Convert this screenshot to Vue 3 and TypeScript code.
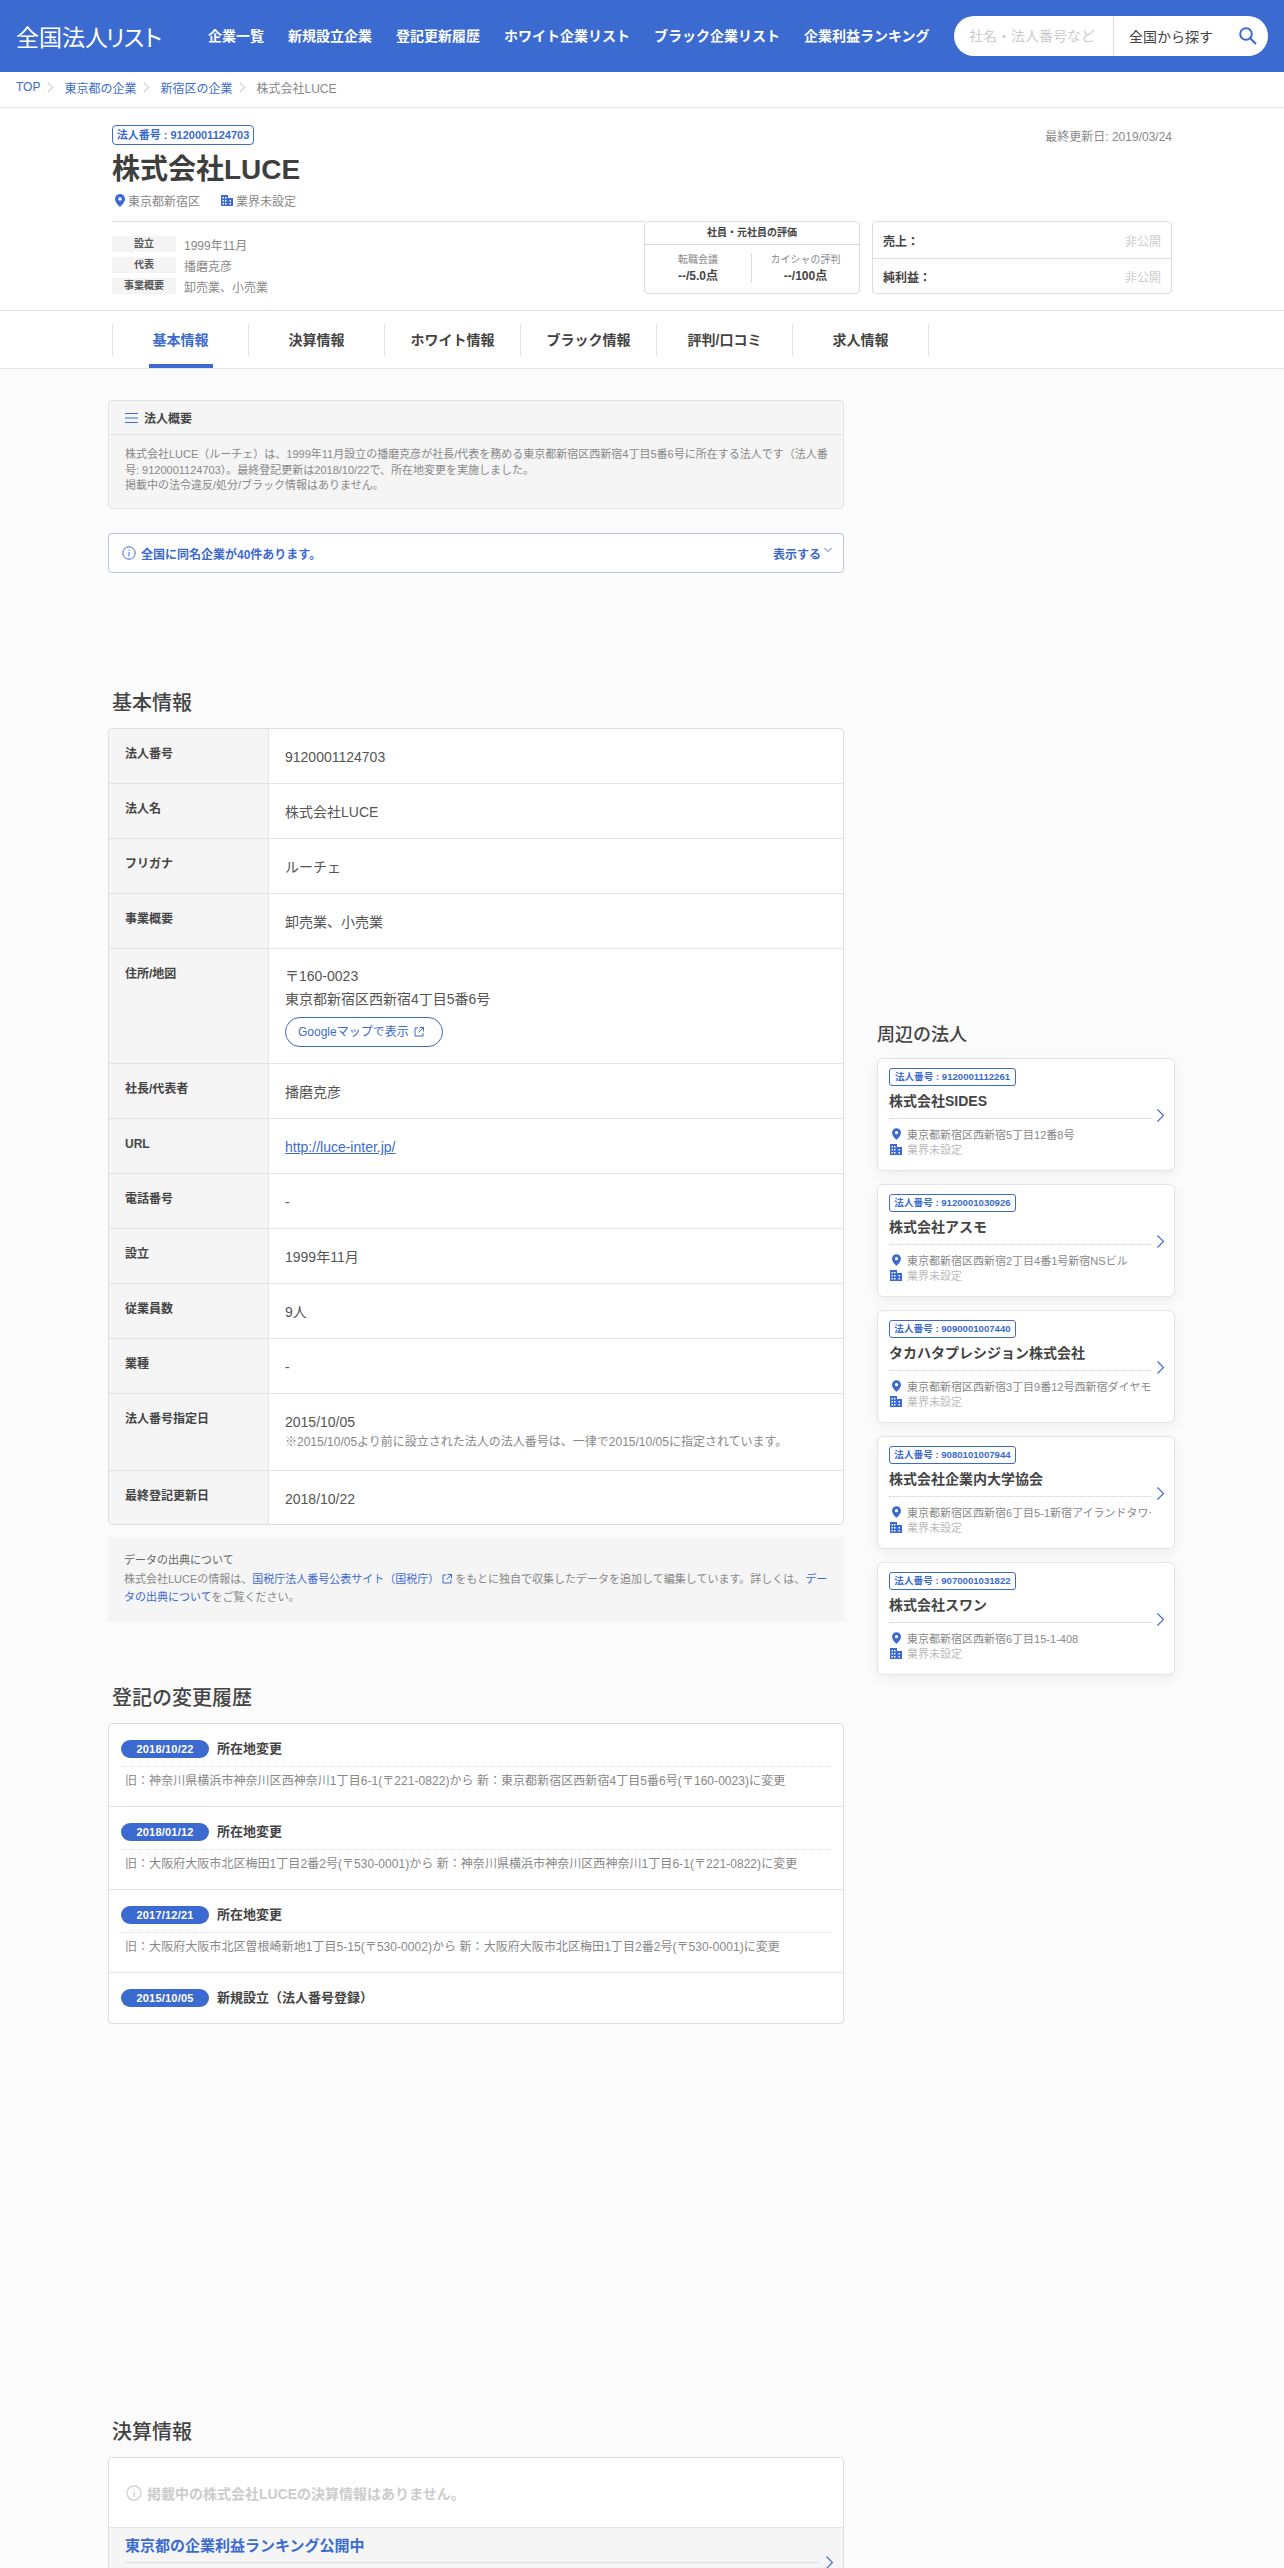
<script setup lang="ts">
const nav: string[] = ['企業一覧', '新規設立企業', '登記更新履歴', 'ホワイト企業リスト', 'ブラック企業リスト', '企業利益ランキング']
const tabs: string[] = ['基本情報', '決算情報', 'ホワイト情報', 'ブラック情報', '評判/口コミ', '求人情報']
const facts: [string, string][] = [['設立', '1999年11月'], ['代表', '播磨克彦'], ['事業概要', '卸売業、小売業']]
const simpleTop: [string, string][] = [['法人番号', '9120001124703'], ['法人名', '株式会社LUCE'], ['フリガナ', 'ルーチェ'], ['事業概要', '卸売業、小売業']]
const simpleMid: [string, string][] = [['電話番号', '-'], ['設立', '1999年11月'], ['従業員数', '9人'], ['業種', '-']]
const history = [
  { date: '2018/10/22', title: '所在地変更', text: '旧：神奈川県横浜市神奈川区西神奈川1丁目6-1(〒221-0822)から 新：東京都新宿区西新宿4丁目5番6号(〒160-0023)に変更' },
  { date: '2018/01/12', title: '所在地変更', text: '旧：大阪府大阪市北区梅田1丁目2番2号(〒530-0001)から 新：神奈川県横浜市神奈川区西神奈川1丁目6-1(〒221-0822)に変更' },
  { date: '2017/12/21', title: '所在地変更', text: '旧：大阪府大阪市北区曽根崎新地1丁目5-15(〒530-0002)から 新：大阪府大阪市北区梅田1丁目2番2号(〒530-0001)に変更' },
  { date: '2015/10/05', title: '新規設立（法人番号登録）', text: '' },
]
const nearby = [
  { no: '9120001112261', name: '株式会社SIDES', addr: '東京都新宿区西新宿5丁目12番8号' },
  { no: '9120001030926', name: '株式会社アスモ', addr: '東京都新宿区西新宿2丁目4番1号新宿NSビル' },
  { no: '9090001007440', name: 'タカハタプレシジョン株式会社', addr: '東京都新宿区西新宿3丁目9番12号西新宿ダイヤモンドビル' },
  { no: '9080101007944', name: '株式会社企業内大学協会', addr: '東京都新宿区西新宿6丁目5-1新宿アイランドタワー' },
  { no: '9070001031822', name: '株式会社スワン', addr: '東京都新宿区西新宿6丁目15-1-408' },
]
</script>

<template>
  <div class="page">
    <header class="hd">
      <div class="logo">全国法人<span class="kana">リスト</span></div>
      <nav class="nav"><a v-for="n in nav" :key="n">{{ n }}</a></nav>
      <div class="search">
        <span class="ph">社名・法人番号など</span>
        <span class="area">全国から探す</span>
        <svg class="glass" width="18" height="18" viewBox="0 0 18 18" fill="none" stroke="#3b6ad0" stroke-width="2"><circle cx="7" cy="7" r="5.8"/><path d="M11.2 11.2 17 17"/></svg>
      </div>
    </header>

    <div class="crumbs">
      <a>TOP</a><i class="cr"></i><a>東京都の企業</a><i class="cr"></i><a>新宿区の企業</a><i class="cr"></i><span>株式会社LUCE</span>
    </div>

    <section class="co">
      <div class="co-in">
        <div class="co-top">
          <span class="badge big">法人番号 : 9120001124703</span>
          <span class="upd">最終更新日: 2019/03/24</span>
        </div>
        <h1>株式会社LUCE</h1>
        <div class="meta">
          <svg class="pin" width="10" height="13" viewBox="0 0 10 13"><path fill="#3b6ad0" fill-rule="evenodd" d="M5 0a5 5 0 0 1 5 5c0 3-3 6-5 8-2-2-5-5-5-8a5 5 0 0 1 5-5Zm0 3.2a1.8 1.8 0 1 0 0 3.6 1.8 1.8 0 0 0 0-3.6Z"/></svg>
          <span>東京都新宿区</span>
          <svg class="bld" width="12" height="12" viewBox="0 0 12 12"><path fill="#3b6ad0" fill-rule="evenodd" d="M0 1h7v11H0ZM7 4h5v8H7ZM1.5 3v1.5H3V3Zm2.5 0v1.5h1.5V3ZM1.5 6v1.5H3V6ZM4 6v1.5h1.5V6Zm4.5 0v1.5H10V6ZM1.5 9v1.5H3V9ZM4 9v1.5h1.5V9Zm4.5 0v1.5H10V9Z"/></svg>
          <span>業界未設定</span>
        </div>
        <div class="co-low">
          <div class="facts">
            <div v-for="f in facts" :key="f[0]" class="fact"><b>{{ f[0] }}</b><span>{{ f[1] }}</span></div>
          </div>
          <div class="rate">
            <div class="rate-t">社員・元社員の評価</div>
            <div class="rate-b">
              <div><small>転職会議</small><strong>--/5.0点</strong></div>
              <div><small>カイシャの評判</small><strong>--/100点</strong></div>
            </div>
          </div>
          <div class="sales">
            <div><b>売上：</b><span>非公開</span></div>
            <div><b>純利益：</b><span>非公開</span></div>
          </div>
        </div>
      </div>
    </section>

    <div class="tabs">
      <div class="tabs-in">
        <a v-for="(t, i) in tabs" :key="t" :class="{ on: i === 0 }">{{ t }}</a>
      </div>
    </div>

    <main class="main">
      <div class="left">
        <section class="gist">
          <div class="gist-h">
            <svg width="13" height="12" viewBox="0 0 13 12" stroke="#3b6ad0" stroke-width="1"><path d="M0 1.5h13M0 6h13M0 10.5h13"/></svg>
            <b>法人概要</b>
          </div>
          <p>株式会社LUCE（ルーチェ）は、1999年11月設立の播磨克彦が社長/代表を務める東京都新宿区西新宿4丁目5番6号に所在する法人です（法人番号: 9120001124703）。最終登記更新は2018/10/22で、所在地変更を実施しました。<br>掲載中の法令違反/処分/ブラック情報はありません。</p>
        </section>

        <div class="notice">
          <svg width="14" height="14" viewBox="0 0 14 14" fill="none" stroke="#3b6ad0"><circle cx="7" cy="7" r="6.2"/><path d="M7 6v4.5M7 3.5v1.2"/></svg>
          <b>全国に同名企業が40件あります。</b>
          <span class="show">表示する</span>
          <svg class="chev-d" width="8" height="6" viewBox="0 0 8 6" fill="none" stroke="#3b6ad0"><path d="M.5 1 4 4.5 7.5 1"/></svg>
        </div>

        <h2 class="h-basic">基本情報</h2>
        <div class="tbl">
          <div v-for="r in simpleTop" :key="r[0]" class="row"><div class="k">{{ r[0] }}</div><div class="v">{{ r[1] }}</div></div>
          <div class="row">
            <div class="k">住所/地図</div>
            <div class="v addr">
              <div>〒160-0023</div>
              <div>東京都新宿区西新宿4丁目5番6号</div>
              <a class="map">Googleマップで表示
                <svg width="10" height="10" viewBox="0 0 10 10" fill="none" stroke="#3b6ad0"><path d="M4 1H1v8h8V6M5.5.5h4v4M9.5.5 4.5 5.5"/></svg>
              </a>
            </div>
          </div>
          <div class="row"><div class="k">社長/代表者</div><div class="v">播磨克彦</div></div>
          <div class="row"><div class="k">URL</div><div class="v"><a class="url">http://luce-inter.jp/</a></div></div>
          <div v-for="r in simpleMid" :key="r[0]" class="row"><div class="k">{{ r[0] }}</div><div class="v">{{ r[1] }}</div></div>
          <div class="row tall">
            <div class="k">法人番号指定日</div>
            <div class="v">2015/10/05<div class="note">※2015/10/05より前に設立された法人の法人番号は、一律で2015/10/05に指定されています。</div></div>
          </div>
          <div class="row last"><div class="k">最終登記更新日</div><div class="v">2018/10/22</div></div>
        </div>

        <div class="src">
          <div class="src-t">データの出典について</div>
          <p>株式会社LUCEの情報は、<a>国税庁法人番号公表サイト（国税庁）<svg width="10" height="10" viewBox="0 0 10 10" fill="none" stroke="#3b6ad0"><path d="M4 1H1v8h8V6M5.5.5h4v4M9.5.5 4.5 5.5"/></svg></a>をもとに独自で収集したデータを追加して編集しています。詳しくは、<a>データの出典について</a>をご覧ください。</p>
        </div>

        <h2 class="h-hist">登記の変更履歴</h2>
        <div class="hist">
          <div v-for="h in history" :key="h.date" class="h-row">
            <div class="h-top"><span class="pill">{{ h.date }}</span><b>{{ h.title }}</b></div>
            <div v-if="h.text" class="h-text">{{ h.text }}</div>
          </div>
        </div>

        <h2 class="h-fin">決算情報</h2>
        <div class="fin">
          <div class="none">
            <svg width="16" height="16" viewBox="0 0 14 14" fill="none" stroke="#ccc"><circle cx="7" cy="7" r="6.2"/><path d="M7 6v4.5M7 3.5v1.2"/></svg>
            掲載中の株式会社LUCEの決算情報はありません。
          </div>
          <div class="rank">
            <b>東京都の企業利益ランキング公開中</b>
            <svg class="chev-r" width="7" height="13" viewBox="0 0 7 13" fill="none" stroke="#3b6ad0" stroke-width="1.2"><path d="M.5.5 6.5 6.5.5 12.5"/></svg>
          </div>
        </div>
      </div>

      <aside class="right">
        <h2 class="h-near">周辺の法人</h2>
        <a v-for="c in nearby" :key="c.no" class="card">
          <span class="badge">法人番号 : {{ c.no }}</span>
          <div class="c-name">{{ c.name }}</div>
          <div class="c-line">
            <svg width="9" height="12" viewBox="0 0 10 13"><path fill="#3b6ad0" fill-rule="evenodd" d="M5 0a5 5 0 0 1 5 5c0 3-3 6-5 8-2-2-5-5-5-8a5 5 0 0 1 5-5Zm0 3.2a1.8 1.8 0 1 0 0 3.6 1.8 1.8 0 0 0 0-3.6Z"/></svg>
            <span>{{ c.addr }}</span>
          </div>
          <div class="c-line ind">
            <svg width="12" height="12" viewBox="0 0 12 12"><path fill="#3b6ad0" fill-rule="evenodd" d="M0 1h7v11H0ZM7 4h5v8H7ZM1.5 3v1.5H3V3Zm2.5 0v1.5h1.5V3ZM1.5 6v1.5H3V6ZM4 6v1.5h1.5V6Zm4.5 0v1.5H10V6ZM1.5 9v1.5H3V9ZM4 9v1.5h1.5V9Zm4.5 0v1.5H10V9Z"/></svg>
            <span>業界未設定</span>
          </div>
          <svg class="c-chev" width="7" height="13" viewBox="0 0 7 13" fill="none" stroke="#3b6ad0" stroke-width="1.2"><path d="M.5.5 6.5 6.5.5 12.5"/></svg>
        </a>
      </aside>
    </main>
  </div>
</template>

<style>
html, body { margin: 0; background: #fbfbfb; }
</style>

<style scoped>
* { box-sizing: border-box; }
.page { width: 1284px; height: 2568px; overflow: hidden; background: #fbfbfb; color: #444; font-family: "Liberation Sans", "Noto Sans CJK JP", sans-serif; font-size: 12px; }
p, h1, h2 { margin: 0; }

.hd { height: 72px; background: #3b6ad0; display: flex; align-items: center; padding: 0 16px; color: #fff; }
.logo { width: 192px; padding-bottom: 1px; font-family: "Noto Sans CJK JP", sans-serif; font-weight: 400; font-size: 23px; white-space: nowrap; }
.kana { letter-spacing: -4.5px; margin-left: -4px; }
.nav { display: flex; gap: 24px; font-size: 14px; font-weight: 700; width: 746px; padding-bottom: 2px; }
.nav a { white-space: nowrap; }
.search { width: 314px; height: 40px; background: #fff; border-radius: 20px; display: flex; align-items: center; position: relative; }
.ph { width: 160px; padding-left: 15px; color: #ccc; font-size: 14px; height: 40px; line-height: 40px; border-right: 1px solid #ddd; }
.area { padding-left: 15px; color: #444; font-size: 14px; }
.glass { position: absolute; right: 11px; top: 11px; }

.crumbs { height: 36px; background: #fff; border-bottom: 1px solid #e3e3e3; display: flex; align-items: center; padding: 0 16px 5px; color: #888; }
.crumbs a { color: #3b6ad0; }
.cr { width: 7px; height: 7px; border-top: 1px solid #ccc; border-right: 1px solid #ccc; transform: rotate(45deg); margin: 0 12px 0 5px; }

.co { height: 203px; background: #fff; border-bottom: 1px solid #e3e3e3; }
.co-in { width: 1060px; margin-left: 112px; padding-top: 17px; }
.co-top { display: flex; justify-content: space-between; align-items: center; height: 20px; }
.upd { color: #888; }
.badge { display: block; width: 127px; height: 18px; line-height: 16px; border: 1px solid #3b6ad0; border-radius: 3px; color: #3b6ad0; font-size: 9.6px; font-weight: 700; text-align: center; white-space: nowrap; }
.badge.big { width: 142px; height: 20px; line-height: 18px; font-size: 11px; border-radius: 4px; }
h1 { font-size: 28px; line-height: 40px; margin-top: 5px; color: #3e3e3e; font-weight: 700; }
.meta { display: flex; align-items: center; height: 20px; margin-top: 0; color: #888; }
.pin { margin: 0 3px 0 3px; }
.bld { margin: 0 3px 0 21px; }
.co-low { display: flex; margin-top: 11px; height: 73px; position: relative; }
.facts { width: 532px; border-top: 1px solid #ddd; padding-top: 14px; }
.fact { display: flex; height: 16px; margin-bottom: 5px; align-items: center; color: #888; }
.fact b { width: 64px; height: 16px; line-height: 16px; background: #f4f4f4; color: #555; font-size: 10px; text-align: center; margin-right: 8px; }
.rate { width: 216px; height: 73px; border: 1px solid #ddd; border-radius: 4px; background: #fff; }
.rate-t { height: 23px; line-height: 22px; border-bottom: 1px solid #ddd; text-align: center; font-size: 10px; font-weight: 700; color: #444; }
.rate-b { display: flex; padding-top: 8px; }
.rate-b > div { flex: 1 1 0; height: 30px; text-align: center; display: flex; flex-direction: column; }
.rate-b > div:first-child { border-right: 1px solid #ddd; flex: 0 0 107px; }
.rate-b small { font-size: 10px; color: #888; line-height: 14px; }
.rate-b strong { font-size: 12px; line-height: 18px; color: #444; }
.sales { width: 300px; height: 73px; margin-left: 12px; border: 1px solid #ddd; border-radius: 4px; background: #fff; }
.sales div { height: 36px; display: flex; justify-content: space-between; align-items: center; padding: 0 10px; }
.sales div + div { border-top: 1px solid #ddd; }
.sales span { color: #ccc; }

.tabs { height: 58px; background: #fff; border-bottom: 1px solid #e3e3e3; padding: 13px 0 0 112px; }
.tabs-in { display: flex; height: 32px; border-left: 1px solid #e3e3e3; width: 817px; }
.tabs-in a { width: 136px; position: relative; border-right: 1px solid #e3e3e3; text-align: center; font-size: 14px; line-height: 32px; font-weight: 700; color: #444; }
.tabs-in a.on { color: #3b6ad0; }
.tabs-in a.on::after { content: ""; position: absolute; left: 36px; width: 64px; top: 40px; height: 4px; background: #3b6ad0; }

.main { display: flex; padding-left: 108px; align-items: flex-start; }
.left { width: 736px; flex: none; }
.right { width: 298px; margin-left: 33px; padding-top: 653px; }

.gist { margin-top: 31px; height: 109px; background: #f5f5f5; border: 1px solid #e3e3e3; border-radius: 4px; }
.gist-h { height: 34px; display: flex; align-items: center; gap: 6px; padding-left: 16px; border-bottom: 1px solid #e3e3e3; color: #444; }
.gist p { padding: 12px 12px 0 16px; line-height: 15.5px; color: #888; font-size: 11px; }
.notice { margin-top: 24px; height: 40px; border: 1px solid #b9c5e2; border-radius: 4px; background: #fff; display: flex; align-items: center; padding: 0 11px 0 13px; color: #3b6ad0; }
.notice b { margin-left: 5px; flex: 1; }
.show { font-weight: 700; }
.chev-d { margin: -6px 0 0 3px; }

h2 { font-size: 20px; font-weight: 500; line-height: 28px; color: #444; padding-left: 4px; }
.h-basic { margin-top: 116px; }
.tbl { margin-top: 11px; background: #fff; border: 1px solid #ddd; border-radius: 4px; overflow: hidden; }
.row { display: flex; min-height: 55px; border-bottom: 1px solid #e3e3e3; }
.row.last { border-bottom: 0; min-height: 53px; height: 53px; }
.row.tall { height: 77px; }
.k { width: 160px; background: #f5f5f5; border-right: 1px solid #e3e3e3; padding: 16px 16px 0; font-size: 12px; font-weight: 700; line-height: 18px; color: #444; }
.v { flex: 1; padding: 17px 16px 0; font-size: 14px; line-height: 22px; color: #555; }
.addr { height: 114px; padding-top: 16px; line-height: 23px; }
.map { display: flex; align-items: center; gap: 5px; width: 158px; height: 30px; margin-top: 6px; padding-left: 12px; border: 1px solid #3b6ad0; border-radius: 15px; font-size: 12px; color: #3b6ad0; }
.url { color: #3b6ad0; text-decoration: underline; }
.note { font-size: 12px; color: #888; line-height: 18px; }

.src { margin-top: 12px; height: 85px; background: #f5f5f5; border-radius: 4px; padding: 14px 12px 14px 16px; color: #888; font-size: 11px; line-height: 18px; }
.src-t { color: #666; }
.src p { line-height: 17.5px; margin-top: 2px; }
.src a { color: #3b6ad0; }
.src svg { margin: 0 3px -1px 3px; }

.h-hist { margin-top: 62px; }
.hist { margin-top: 11px; height: 301px; background: #fff; border: 1px solid #ddd; border-radius: 4px; }
.h-row { height: 83px; padding: 16px 12px 0; border-bottom: 1px solid #e3e3e3; }
.h-row:last-child { border-bottom: 0; }
.h-top { display: flex; align-items: flex-start; height: 27px; border-bottom: 1px dotted #ddd; font-size: 13px; line-height: 18px; }
.h-row:last-child .h-top { border-bottom: 0; }
.pill { width: 88px; height: 18px; line-height: 18px; border-radius: 9px; background: #3b6ad0; color: #fff; font-size: 11px; font-weight: 700; text-align: center; margin-right: 8px; letter-spacing: .2px; }
.h-text { padding: 5px 4px 0; color: #888; line-height: 18px; white-space: nowrap; letter-spacing: .05px; }

.h-fin { margin-top: 394px; }
.fin { margin-top: 11px; background: #fff; border: 1px solid #ddd; border-radius: 4px 4px 0 0; height: 200px; }
.none { height: 70px; display: flex; align-items: center; gap: 5px; padding-left: 17px; font-size: 14px; font-weight: 700; color: #ccc; border-bottom: 1px solid #e3e3e3; }
.rank { position: relative; height: 130px; background: #f5f5f5; padding: 9px 16px 0; color: #3b6ad0; font-size: 15px; }
.rank b { display: block; line-height: 18px; padding-bottom: 7px; border-bottom: 1px solid #ddd; margin-right: 8px; }
.chev-r { position: absolute; right: 10px; top: 28px; }

.h-near { font-size: 18px; line-height: 26px; padding-left: 0; margin-bottom: -3px; }
.card { display: block; position: relative; height: 113px; margin-top: 13px; padding: 9px 11px 0; background: #fff; border: 1px solid #e3e3e3; border-radius: 6px; box-shadow: 0 4px 12px rgba(0, 0, 0, .05); }
.c-name { height: 33px; line-height: 30px; font-size: 14px; font-weight: 700; color: #444; width: 262px; border-bottom: 1px dotted #ccc; margin-bottom: 7px; white-space: nowrap; }
.c-line { display: flex; align-items: center; height: 15.5px; color: #888; font-size: 11px; width: 262px; }
.c-line svg { flex: none; margin: 0 6px 0 3px; }
.c-line span { overflow: hidden; white-space: nowrap; min-width: 0; }
.c-line.ind { color: #bbb; }
.c-line.ind svg { margin: 0 5px 0 1px; }
.c-chev { position: absolute; right: 10px; top: 50px; }
</style>
